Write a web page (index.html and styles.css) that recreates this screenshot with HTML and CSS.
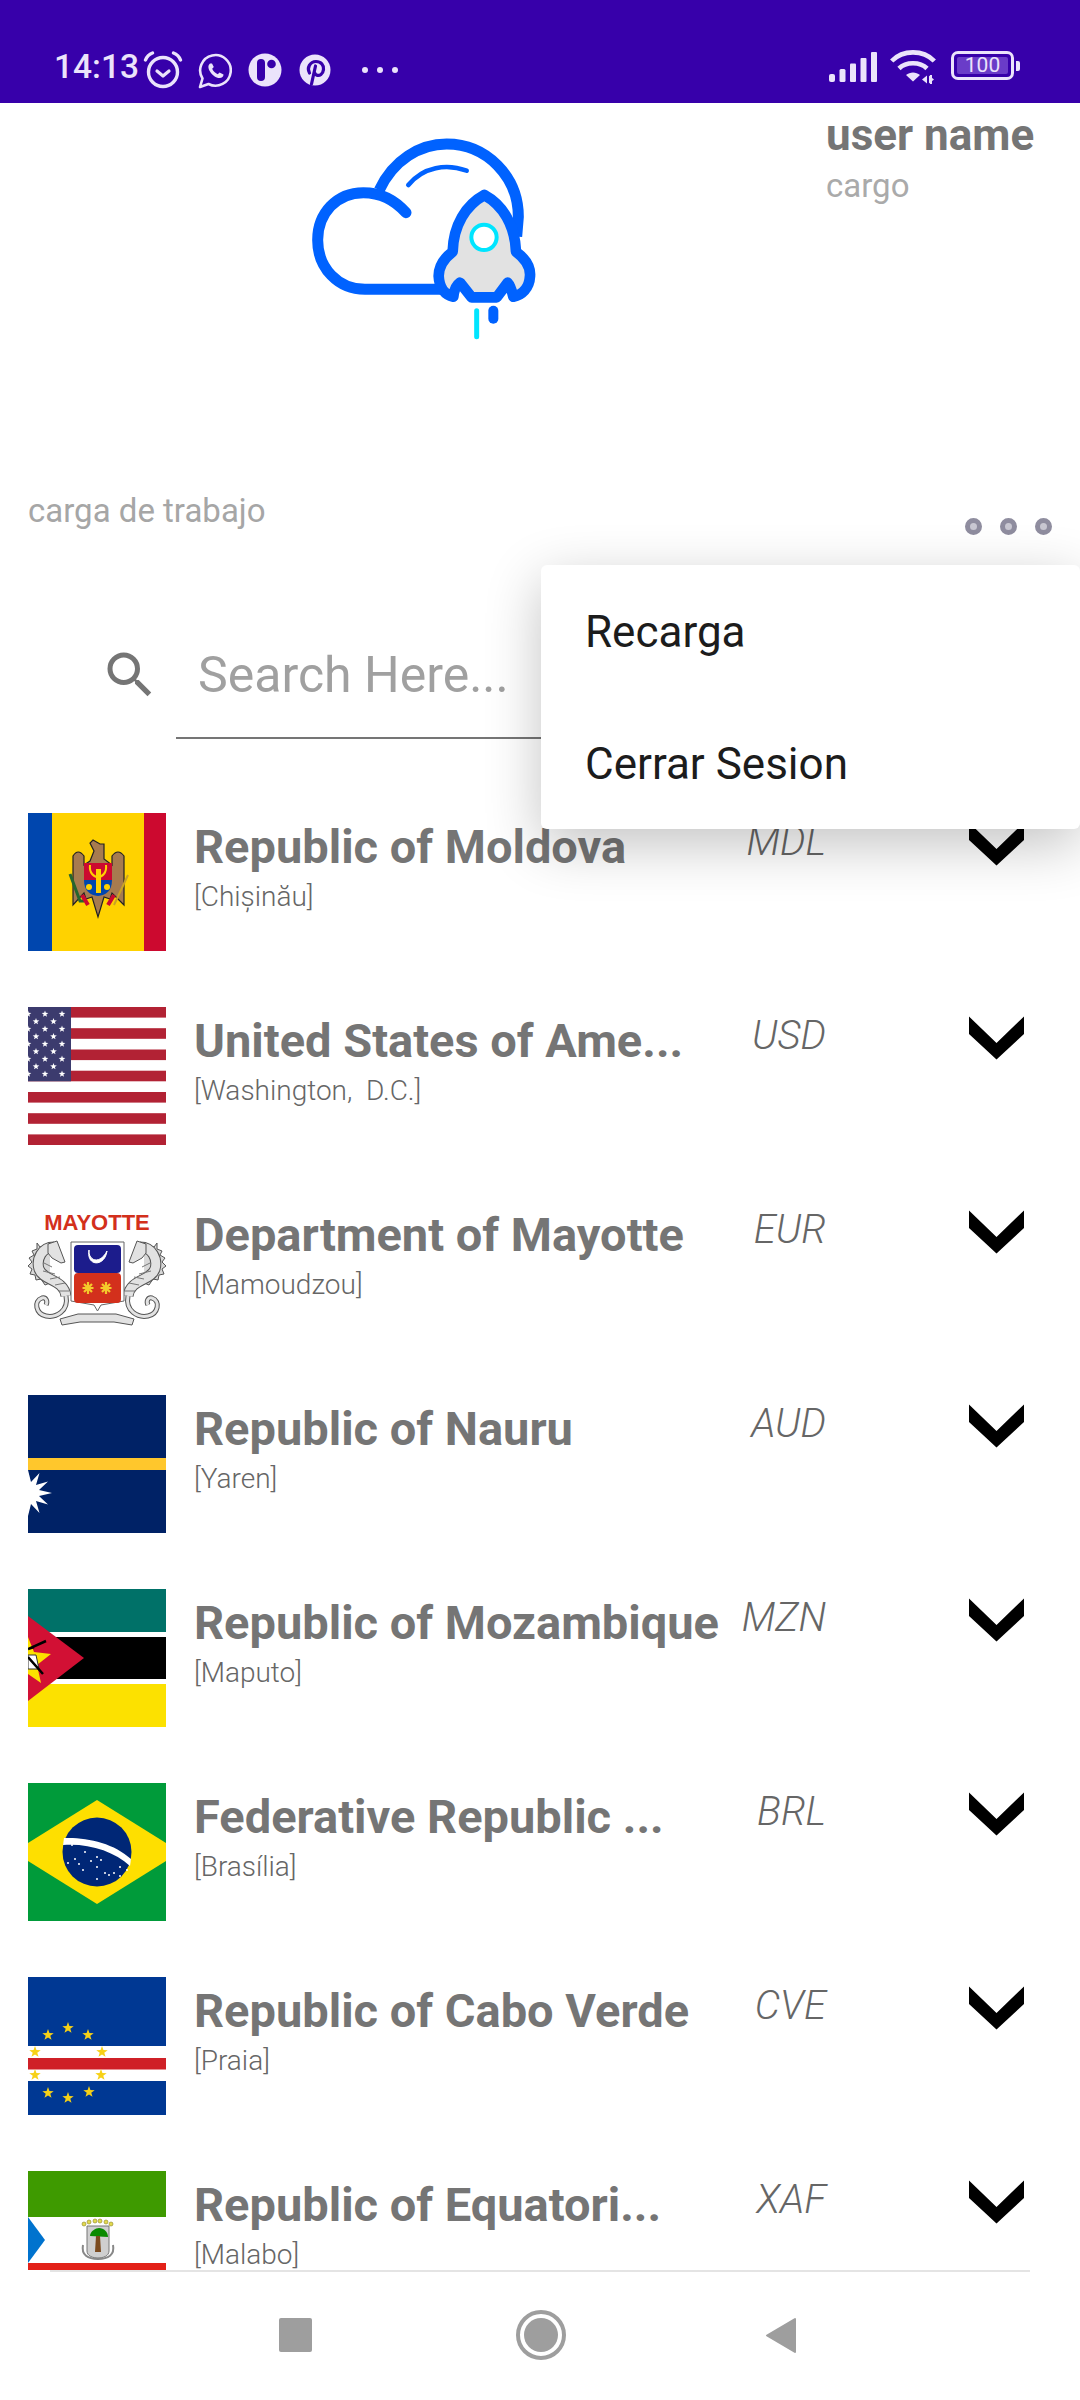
FILE: index.html
```html
<!DOCTYPE html>
<html lang="es">
<head>
<meta charset="utf-8">
<title>Lista de países</title>
<link rel="stylesheet" href="styles.css">
</head>
<body>
<svg class="defs" width="0" height="0" aria-hidden="true">
  <defs>
    <polygon id="star" points="0,-1 .235,-.324 .951,-.309 .38,.124 .588,.809 0,.4 -.588,.809 -.38,.124 -.951,-.309 -.235,-.324"/>
    <symbol id="chev" viewBox="0 0 56 46">
      <polygon points="0,1 0,19 28,45 56,19 56,1 28,28" fill="#000"/>
    </symbol>
    <g id="seahorse">
      <path d="M22 44 L12 46 L9 42 L9 48 L4 50 L6 54 L1 57 L4 61 L0 65 L4 68 L2 73 L7 74 L8 79 L13 78 L17 84 L22 82" fill="#d8d8d8" stroke="#555" stroke-width="1"/>
      <path d="M26 46 C14 46 8 58 11 68 C15 80 36 78 38 95" fill="none" stroke="#555" stroke-width="11"/>
      <path d="M26 46 C14 46 8 58 11 68 C15 80 36 78 38 95" fill="none" stroke="#e2e2e2" stroke-width="9"/>
      <path d="M38 95 C41 110 28 117 18 115 C8 113 5 100 14 97 C18 96 20 100 18 104" fill="none" stroke="#555" stroke-width="5"/>
      <path d="M38 95 C41 110 28 117 18 115 C8 113 5 100 14 97 C18 96 20 100 18 104" fill="none" stroke="#e2e2e2" stroke-width="3"/>
      <path d="M20 43 L29 40 L37 61 L33 62 L24 57 L20 52 Z" fill="#e2e2e2" stroke="#555" stroke-width="1"/>
      <path d="M16 62 L24 66 M15 70 L27 73 M22 78 L32 76 M27 84 L37 82 M31 90 L41 90" stroke="#777" stroke-width="1"/>
    </g>
  </defs>
</svg>
<div class="phone">
  <header class="status">
    <div class="status-left">
      <span class="time">14:13</span>
      <svg class="ic-alarm" viewBox="0 0 40 38"><circle cx="20" cy="21" r="14.5" fill="none" stroke="#ebe3fb" stroke-width="3.4"/><path d="M14 20l6 5 6-5" fill="none" stroke="#ebe3fb" stroke-width="3.2" stroke-linecap="round" stroke-linejoin="round"/><path d="M2.5 9 C4 5 6.500 3 9.500 2M37.500 9 C36 5 33.500 3 30.500 2" fill="none" stroke="#ebe3fb" stroke-width="3.4" stroke-linecap="round"/></svg>
      <svg class="ic-wa" viewBox="0 0 34 36"><path d="M2 34 L4.500 25.500 A15.300 15.300 0 1 1 10.500 31 Z" fill="none" stroke="#ebe3fb" stroke-width="2.600" stroke-linejoin="round"/><path d="M12 10.500 C10 12 9.800 15 12 18.500 C14.500 22.500 18 25 21.500 25 C24 25 25.500 23.500 25.500 21.500 L21.500 19.500 L19.800 21.300 C17.500 20.500 15 18 14.200 15.800 L15.800 14 L14 10.500 Z" fill="#ebe3fb"/></svg>
      <svg class="ic-p" viewBox="0 0 34 34"><circle cx="17" cy="17" r="16.500" fill="#ebe3fb"/><rect x="9" y="6" width="8" height="22" rx="4" fill="#3700aa"/><circle cx="23.500" cy="11" r="4.300" fill="#3700aa"/></svg>
      <svg class="ic-pin" viewBox="0 0 32 32"><circle cx="16" cy="16" r="15.500" fill="#ebe3fb"/><path d="M10.500 19 C7.500 14 11 7.500 17 7.500 C22 7.500 25 11 24.500 15.500 C24 20 20.500 22.500 17.500 21 C16.500 20.500 16 19.500 15.800 19 M16.500 12 L12.500 30" fill="none" stroke="#3700aa" stroke-width="3.200" stroke-linecap="round"/></svg>
      <span class="more"><i></i><i></i><i></i></span>
    </div>
    <div class="status-right">
      <svg class="ic-signal" viewBox="0 0 48 30"><g fill="#ebe3fb"><rect x="0" y="22" width="6" height="8" rx="2"/><rect x="10.500" y="17" width="6" height="13" rx="1.500"/><rect x="21" y="11.500" width="6" height="18.500" rx="1"/><rect x="31.500" y="6" width="6" height="24" rx="1"/><rect x="42" y="0" width="6" height="30" rx="1"/></g></svg>
      <svg class="ic-wifi" viewBox="0 0 46 34"><g fill="none" stroke="#ebe3fb" stroke-width="4.600"><path d="M1.700 11 C13 -0.500 33 -0.500 44.300 11"/><path d="M9 18.500 C16 11.500 30 11.500 37 18.500"/></g><path d="M16 25 C20 21.500 26 21.500 30 25 L23 31.500 Z" fill="#ebe3fb"/><path d="M32 29.500 L37 25.500 V33.500 Z M39 25.500 L44 29.500 L39 33.500 Z" fill="#ebe3fb"/><path d="M41 25v9" stroke="#ebe3fb" stroke-width="2"/></svg>
      <div class="battery"><span class="battery-body"><span class="battery-level">100</span></span><i class="battery-nib"></i></div>
    </div>
  </header>

  <section class="top">
    <svg class="logo" viewBox="0 0 870 720">
      <g fill="none" stroke="#0062ff" stroke-linecap="round">
        <path d="M378 278 C340 235 295 218 250 218 C170 218 113 280 113 360 C113 445 175 508 255 508 L490 508" stroke-width="33"/>
        <path d="M298 210 C340 120 420 72 500 72 C620 72 715 170 715 290 L710 350" stroke-width="33" stroke-linecap="butt"/>
        <path d="M385 195 C430 140 500 130 560 152" stroke-width="14"/>
      </g>
      <path d="M613 225 C668 255 705 315 708 395 C735 415 752 440 750 468 C748 505 725 525 700 530 C695 510 690 495 683 488 L650 532 L575 532 L540 488 C530 495 522 510 520 530 C495 525 478 505 476 468 C476 440 492 415 518 395 C520 315 558 255 613 225 Z" fill="#e2e2e2" stroke="#0062ff" stroke-width="32" stroke-linejoin="round"/>
      <circle cx="612" cy="352" r="38" fill="#fff" stroke="#00e5ff" stroke-width="12"/>
      <path d="M590 572 V650" stroke="#00e5ff" stroke-width="15" stroke-linecap="round"/>
      <path d="M640 572 V596" stroke="#0062ff" stroke-width="30" stroke-linecap="round"/>
    </svg>
    <div class="user">
      <div class="user-name">user name</div>
      <div class="user-role">cargo</div>
    </div>
  </section>

  <section class="work">
    <span class="work-label">carga de trabajo</span>
    <span class="dots"><i></i><i></i><i></i></span>
  </section>

  <section class="search">
    <svg class="search-icon" viewBox="0 0 24 24"><path d="M15.500 14h-.79l-.28-.27A6.470 6.470 0 0 0 16 9.500 6.500 6.500 0 1 0 9.500 16c1.610 0 3.090-.59 4.230-1.570l.27.28v.79l5 4.990L20.490 19l-4.990-5zm-6 0C7.010 14 5 11.990 5 9.500S7.010 5 9.500 5 14 7.010 14 9.500 11.990 14 9.500 14z" fill="#757575"/></svg>
    <div class="search-field">Search Here...</div>
  </section>

  <section class="list">
    <article class="row">
      <svg class="flag" viewBox="0 0 138 138">
        <rect width="138" height="138" fill="#ffd200"/><rect width="24" height="138" fill="#0046ae"/><rect x="116" width="22" height="138" fill="#cc092f"/>
        <path d="M45 92 V43 Q50 35 56 43 V52 L62 48 L66 38 L62 30 L65 27 L72 31 L76 31 L76 46 L84 52 V43 Q90 35 96 43 V92 L84 80 L82 86 L76 84 L70 104 L64 84 L58 86 L56 80 Z" fill="#a77b4f" stroke="#222" stroke-width="1.200"/>
        <rect x="56" y="50" width="28" height="17" fill="#cc092f"/>
        <path d="M56 67 H84 C84 78 78 82 70 83 C62 82 56 78 56 67 Z" fill="#0046ae"/>
        <path d="M62 52 C61 60 66 64 70 64 C74 64 79 60 78 52" fill="none" stroke="#ffd200" stroke-width="2"/>
        <rect x="68" y="56" width="5" height="24" fill="#ffd200"/>
        <circle cx="61" cy="74" r="3" fill="#ffd200"/><circle cx="79" cy="74" r="3" fill="#ffd200"/>
        <path d="M42 61 L52 88 L56 88" stroke="#26662e" stroke-width="3" fill="none"/><path d="M100 62 L86 92" stroke="#c9a227" stroke-width="2"/>
        <path d="M54 82 L60 92 M86 82 L80 92" stroke="#cc092f" stroke-width="4"/>
      </svg>
      <div class="info"><h2 class="name">Republic of Moldova</h2><p class="capital">[Chișinău]</p></div>
      <span class="code">MDL</span>
      <svg class="chev"><use href="#chev"/></svg>
    </article>

    <article class="row">
      <svg class="flag" viewBox="0 0 138 138">
        <rect width="138" height="138" fill="#fff"/>
        <g fill="#b22234"><rect y="0" width="138" height="10.600"/><rect y="21.200" width="138" height="10.600"/><rect y="42.500" width="138" height="10.600"/><rect y="63.700" width="138" height="10.600"/><rect y="85" width="138" height="10.600"/><rect y="106.200" width="138" height="10.600"/><rect y="127.400" width="138" height="10.600"/></g>
        <rect width="43" height="74.300" fill="#3c3b6e"/>
        <g fill="#fff">
          <use href="#star" transform="translate(0 7) scale(3.500)"/><use href="#star" transform="translate(17 7) scale(3.500)"/><use href="#star" transform="translate(34 7) scale(3.500)"/>
          <use href="#star" transform="translate(8 14.500) scale(3.500)"/><use href="#star" transform="translate(25.500 14.500) scale(3.500)"/>
          <use href="#star" transform="translate(0 22) scale(3.500)"/><use href="#star" transform="translate(17 22) scale(3.500)"/><use href="#star" transform="translate(34 22) scale(3.500)"/>
          <use href="#star" transform="translate(8 29.500) scale(3.500)"/><use href="#star" transform="translate(25.500 29.500) scale(3.500)"/>
          <use href="#star" transform="translate(0 37) scale(3.500)"/><use href="#star" transform="translate(17 37) scale(3.500)"/><use href="#star" transform="translate(34 37) scale(3.500)"/>
          <use href="#star" transform="translate(8 44.500) scale(3.500)"/><use href="#star" transform="translate(25.500 44.500) scale(3.500)"/>
          <use href="#star" transform="translate(0 52) scale(3.500)"/><use href="#star" transform="translate(17 52) scale(3.500)"/><use href="#star" transform="translate(34 52) scale(3.500)"/>
          <use href="#star" transform="translate(8 59.500) scale(3.500)"/><use href="#star" transform="translate(25.500 59.500) scale(3.500)"/>
          <use href="#star" transform="translate(0 67) scale(3.500)"/><use href="#star" transform="translate(17 67) scale(3.500)"/><use href="#star" transform="translate(34 67) scale(3.500)"/>
        </g>
      </svg>
      <div class="info"><h2 class="name">United States of Ame...</h2><p class="capital">[Washington,  D.C.]</p></div>
      <span class="code">USD</span>
      <svg class="chev"><use href="#chev"/></svg>
    </article>

    <article class="row">
      <svg class="flag" viewBox="0 0 138 138">
        <rect width="138" height="138" fill="#fff"/>
        <text class="mayotte" x="69" y="29" text-anchor="middle">MAYOTTE</text>
        <use href="#seahorse"/>
        <use href="#seahorse" transform="matrix(-1 0 0 1 138 0)"/>
        <path d="M32 118 L50 113 L88 113 L106 118 L104 124 L86 121 L52 121 L34 124 Z" fill="#e2e2e2" stroke="#555" stroke-width="1"/>
        <path d="M43 41 H96 V100 L73 104 L69.500 110 L66 104 L43 100 Z" fill="#fff" stroke="#666" stroke-width="1"/>
        <rect x="46" y="44" width="47" height="28" rx="4" fill="#1c1c8c"/>
        <rect x="46" y="72" width="47" height="30" rx="4" fill="#d3301c"/>
        <path d="M61 49 C60 60 72 64 79 50 C77 66 58 66 61 49 Z" fill="#fff" stroke="#fff" stroke-width="1"/>
        <g stroke="#f4c92b" stroke-width="2.200"><path d="M60 81v12M54.500 87h11M56 83l8 8M64 83l-8 8"/><path d="M78 81v12M72.500 87h11M74 83l8 8M82 83l-8 8"/></g>
      </svg>
      <div class="info"><h2 class="name">Department of Mayotte</h2><p class="capital">[Mamoudzou]</p></div>
      <span class="code">EUR</span>
      <svg class="chev"><use href="#chev"/></svg>
    </article>

    <article class="row">
      <svg class="flag" viewBox="0 0 138 138">
        <rect width="138" height="138" fill="#002266"/><rect y="63" width="138" height="12" fill="#ffc72c"/>
        <polygon points="0,75 3,87 11.500,78 8,90 20,86.500 11,95 24,98 11,101 20,109.500 8,106 11.500,118 3,109 0,121" fill="#fff"/>
      </svg>
      <div class="info"><h2 class="name">Republic of Nauru</h2><p class="capital">[Yaren]</p></div>
      <span class="code">AUD</span>
      <svg class="chev"><use href="#chev"/></svg>
    </article>

    <article class="row">
      <svg class="flag" viewBox="0 0 138 138">
        <rect width="138" height="138" fill="#fff"/><rect width="138" height="43" fill="#007168"/><rect y="48" width="138" height="42" fill="#000"/><rect y="95" width="138" height="43" fill="#fce100"/>
        <polygon points="0,27 56,69 0,112" fill="#d21034"/>
        <polygon points="0,48 6,63 23,65 9,76 13,94 0,85" fill="#fce100"/>
        <path d="M0 66 H8 L11 80 H0 Z" fill="#fff" stroke="#333" stroke-width="1"/>
        <path d="M0 60 L18 52 M0 68 L15 85 M0 60 L6 58" stroke="#000" stroke-width="2.500" fill="none"/>
      </svg>
      <div class="info"><h2 class="name">Republic of Mozambique</h2><p class="capital">[Maputo]</p></div>
      <span class="code">MZN</span>
      <svg class="chev"><use href="#chev"/></svg>
    </article>

    <article class="row">
      <svg class="flag" viewBox="0 0 138 138">
        <rect width="138" height="138" fill="#009b3a"/>
        <polygon points="69,17 152.600,69 69,121 -14.600,69" fill="#fedf00"/>
        <circle cx="69" cy="69" r="34.500" fill="#002776"/>
        <path d="M36 55 C58 54 86 60 103 76 L102 83 C86 68 60 60 35 62 Z" fill="#fff"/>
        <g fill="#fff"><circle cx="44" cy="62" r="1"/><circle cx="57" cy="69" r="1"/><circle cx="47" cy="76" r="1"/><circle cx="40" cy="80" r="1"/><circle cx="51" cy="81" r="1"/><circle cx="55" cy="87" r="1"/><circle cx="69" cy="74" r="1"/><circle cx="73" cy="77" r="1"/><circle cx="69" cy="84" r="1"/><circle cx="63" cy="78" r="1"/><circle cx="77" cy="90" r="1"/><circle cx="86" cy="90" r="1"/><circle cx="92" cy="93" r="1"/><circle cx="99" cy="87" r="1"/><circle cx="92" cy="84" r="1"/><circle cx="81" cy="92" r="1"/><circle cx="69" cy="96" r="1"/></g>
      </svg>
      <div class="info"><h2 class="name">Federative Republic ...</h2><p class="capital">[Brasília]</p></div>
      <span class="code">BRL</span>
      <svg class="chev"><use href="#chev"/></svg>
    </article>

    <article class="row">
      <svg class="flag" viewBox="0 0 138 138">
        <rect width="138" height="138" fill="#003893"/><rect y="69" width="138" height="35" fill="#fff"/><rect y="81" width="138" height="11.500" fill="#cf2027"/>
        <g fill="#f7d116">
          <use href="#star" transform="translate(20 58) scale(6)"/><use href="#star" transform="translate(40 51) scale(6)"/><use href="#star" transform="translate(60 58) scale(6)"/>
          <use href="#star" transform="translate(7 75) scale(6)"/><use href="#star" transform="translate(74 75) scale(6)"/>
          <use href="#star" transform="translate(7 98) scale(6)"/><use href="#star" transform="translate(73 98) scale(6)"/>
          <use href="#star" transform="translate(20 116) scale(6)"/><use href="#star" transform="translate(40 121) scale(6)"/><use href="#star" transform="translate(61 115) scale(6)"/>
        </g>
      </svg>
      <div class="info"><h2 class="name">Republic of Cabo Verde</h2><p class="capital">[Praia]</p></div>
      <span class="code">CVE</span>
      <svg class="chev"><use href="#chev"/></svg>
    </article>

    <article class="row">
      <svg class="flag" viewBox="0 0 138 138">
        <rect width="138" height="138" fill="#fff"/><rect width="138" height="46" fill="#3e9a00"/><rect y="92" width="138" height="46" fill="#e32118"/>
        <polygon points="0,46 17,69 0,92" fill="#0073ce"/>
        <path d="M59 55 H81 V80 C81 85 75 87 70 87 C65 87 59 85 59 80 Z" fill="#cfcfcf" stroke="#777" stroke-width="1"/>
        <path d="M62 65 C62 60 68 57 71 57 C76 57 80 61 80 66 Z" fill="#0a8a00"/>
        <path d="M68 65 H72 L73 81 H67 Z" fill="#7b4a1e"/>
        <path d="M55 74 C53 84 60 88 70 88 C80 88 87 84 85 74" fill="none" stroke="#888" stroke-width="2"/>
        <g fill="#e2d94c" stroke="#8a8326" stroke-width=".6"><circle cx="56" cy="53" r="2"/><circle cx="61" cy="51" r="2"/><circle cx="67" cy="50" r="2"/><circle cx="72" cy="50" r="2"/><circle cx="78" cy="51" r="2"/><circle cx="83" cy="53" r="2"/></g>
      </svg>
      <div class="info"><h2 class="name">Republic of Equatori...</h2><p class="capital">[Malabo]</p></div>
      <span class="code">XAF</span>
      <svg class="chev"><use href="#chev"/></svg>
    </article>
  </section>

  <div class="list-rule"></div>

  <nav class="nav">
    <i class="nav-square"></i>
    <svg class="nav-home" viewBox="0 0 50 50"><circle cx="25" cy="25" r="23" fill="none" stroke="#9e9e9e" stroke-width="4"/><circle cx="25" cy="25" r="17" fill="#9e9e9e"/></svg>
    <svg class="nav-back" viewBox="0 0 32 37"><path d="M30 2 V35 L2 18.500 Z" fill="#9e9e9e" stroke="#9e9e9e" stroke-width="2" stroke-linejoin="round"/></svg>
  </nav>

  <aside class="menu">
    <div class="menu-item">Recarga</div>
    <div class="menu-item">Cerrar Sesion</div>
  </aside>
</div>
</body>
</html>
```
FILE: styles.css
```css
* { box-sizing: border-box; }
html, body { margin: 0; padding: 0; background: #fff; }
body { font-family: Roboto, "Noto Sans", sans-serif; }
.defs { position: absolute; }
.phone { position: relative; width: 1080px; height: 2400px; overflow: hidden; background: #fff; }

.status { height: 103px; background: #3700aa; display: flex; justify-content: space-between; align-items: flex-start; padding: 50px 60px 0 54px; color: #ebe3fb; }
.status-left { display: flex; align-items: flex-start; }
.status-right { display: flex; align-items: flex-start; }
.time { font-size: 33.500px; font-weight: 500; line-height: 34px; }
.ic-alarm { width: 40px; height: 38px; margin: 1px 0 0 4px; }
.ic-wa { width: 34px; height: 36px; margin: 3px 0 0 15px; }
.ic-p { width: 34px; height: 34px; margin: 3px 0 0 16px; }
.ic-pin { width: 32px; height: 32px; margin: 4px 0 0 17px; }
.more { display: flex; gap: 9px; margin: 17px 0 0 31px; }
.more i { width: 6px; height: 6px; border-radius: 50%; background: #ebe3fb; }
.ic-signal { width: 48px; height: 30px; margin: 2px 0 0 0; }
.ic-wifi { width: 46px; height: 34px; margin: 0 0 0 13px; }
.battery { display: flex; align-items: center; margin: 1px 0 0 15px; }
.battery-body { width: 63px; height: 29px; border: 3px solid #ebe3fb; border-radius: 7px; padding: 3px; display: flex; }
.battery-level { flex: 1; background: #6a3cc8; border-radius: 2px; font-size: 21px; line-height: 17px; text-align: center; color: #ebe3fb; }
.battery-nib { width: 4px; height: 10px; margin-left: 2px; background: #ebe3fb; border-radius: 0 2px 2px 0; }

.top { display: flex; height: 382px; }
.logo { width: 290px; height: 240px; margin: 17px 0 0 280px; flex: none; }
.user { margin-left: 256px; padding-top: 7px; }
.user-name { font-size: 44px; font-weight: 700; color: #757575; line-height: 50px; }
.user-role { font-size: 33px; color: #aaaaaa; line-height: 40px; margin-top: 6px; }

.work { display: flex; justify-content: space-between; align-items: flex-start; height: 160px; padding: 0 28px; }
.work-label { font-size: 33px; color: #a6a6a6; line-height: 40px; margin-top: 6px; }
.dots { display: flex; gap: 18px; margin-top: 33px; }
.dots i { width: 17px; height: 17px; border-radius: 50%; border: 5px solid #8f8d9f; background: #c9c8d2; filter: blur(.6px); }

.search { display: flex; height: 168px; padding-left: 100px; }
.search-icon { width: 60px; height: 60px; flex: none; }
.search-field { width: 398px; height: 94px; margin: 0 0 0 16px; padding: 2px 0 0 22px; border-bottom: 2px solid #757575; color: #a0a0a0; font-size: 50px; line-height: 56px; }

.list { height: 1457px; overflow: hidden; }
.row { display: flex; height: 194px; padding-left: 28px; }
.flag { width: 138px; height: 138px; flex: none; display: block; }
.info { flex: none; width: 520px; padding: 7px 0 0 28px; }
.name { margin: 0; font-size: 47px; font-weight: 700; color: #757575; line-height: 54px; white-space: nowrap; }
.capital { margin: 5px 0 0; font-size: 28px; font-weight: 300; color: #666; line-height: 36px; white-space: pre; }
.code { width: 140px; margin-top: 7px; height: 44px; text-align: right; font-size: 40px; font-weight: 300; font-style: italic; color: #666; line-height: 44px; }
.chev { width: 55px; height: 46px; flex: none; margin: 8px 0 0 143px; filter: blur(.5px); }

.list-rule { height: 2px; margin: 0 50px; background: #e4e4e4; }
.nav { display: flex; align-items: center; height: 126px; padding-left: 279px; }
.nav-square { width: 33px; height: 34px; border-radius: 2px; background: #9e9e9e; }
.nav-home { width: 50px; height: 50px; margin-left: 204px; }
.nav-back { width: 32px; height: 37px; margin-left: 199px; }

.menu { position: absolute; left: 541px; top: 565px; width: 539px; height: 264px; padding: 0 44px; background: #fff; border-radius: 6px; box-shadow: 0 16px 56px rgba(0,0,0,.24); }
.menu-item { height: 132px; display: flex; align-items: center; padding-top: 2px; font-size: 44px; color: #1c1c1c; }
.mayotte { font-family: "Liberation Sans", Arial, sans-serif; font-weight: 700; font-size: 22px; fill: #d3301c; }
```
